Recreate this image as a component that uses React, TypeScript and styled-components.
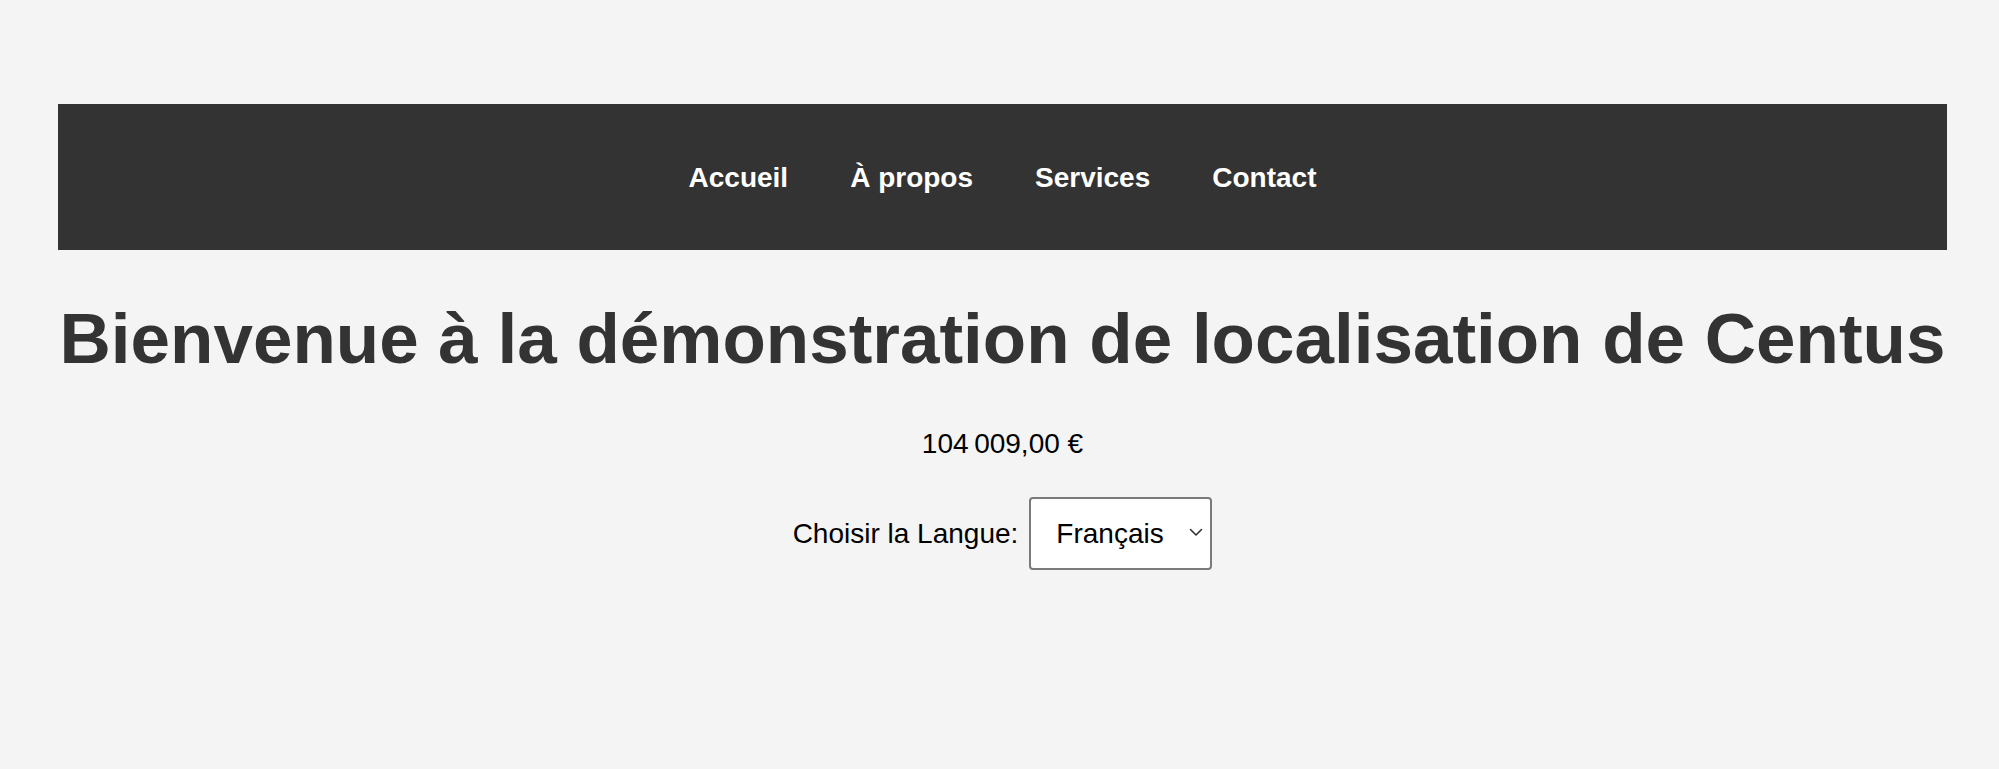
import React, { useState } from "react";
import styled, { createGlobalStyle } from "styled-components";

const GlobalStyle = createGlobalStyle`
  html, body {
    margin: 0;
    padding: 0;
    background: #f4f4f4;
  }
  body {
    font-family: "Liberation Sans", Arial, Helvetica, sans-serif;
    color: #000;
  }
`;

const Page = styled.div`
  padding: 104px 52px 0 58px;
  min-height: 769px;
  box-sizing: border-box;
`;

const NavBar = styled.nav`
  height: 146px;
  background: #333333;
  display: flex;
  align-items: center;
  justify-content: center;
  gap: 62px;
`;

const NavLink = styled.a`
  color: #ffffff;
  font-size: 28px;
  font-weight: 700;
  text-decoration: none;
  line-height: 32px;
  margin-top: 1px;
`;

const Title = styled.h1`
  margin: 48px 0 0;
  font-size: 71px;
  line-height: 82px;
  font-weight: 700;
  color: #333333;
  text-align: center;
  white-space: nowrap;
`;

const Price = styled.p`
  margin: 48px 0 0;
  font-size: 28px;
  line-height: 32px;
  text-align: center;
`;

const LangRow = styled.div`
  margin-top: 37px;
  display: flex;
  justify-content: center;
  align-items: center;
  gap: 11px;
`;

const Label = styled.label`
  font-size: 28px;
  line-height: 32px;
`;

const SelectWrap = styled.div`
  position: relative;
  display: inline-flex;
`;

const Select = styled.select`
  appearance: none;
  -webkit-appearance: none;
  width: 183px;
  height: 73px;
  box-sizing: border-box;
  padding: 0 0 0 25px;
  border: 2px solid #7a7a7a;
  border-radius: 4px;
  background: #ffffff;
  font-family: "Liberation Sans", Arial, Helvetica, sans-serif;
  font-size: 28px;
  color: #000;
  outline: none;
`;

const Chevron = styled.svg`
  position: absolute;
  right: 9px;
  top: 31px;
  width: 14px;
  height: 9px;
  pointer-events: none;
`;

export default function App() {
  const [lang, setLang] = useState("fr");
  return (
    <>
      <GlobalStyle />
      <Page>
        <NavBar>
          <NavLink href="#">Accueil</NavLink>
          <NavLink href="#">À propos</NavLink>
          <NavLink href="#">Services</NavLink>
          <NavLink href="#">Contact</NavLink>
        </NavBar>
        <Title>Bienvenue à la démonstration de localisation de Centus</Title>
        <Price>104&#8239;009,00 €</Price>
        <LangRow>
          <Label htmlFor="lang">Choisir la Langue:</Label>
          <SelectWrap>
            <Select id="lang" value={lang} onChange={(e) => setLang(e.target.value)}>
              <option value="fr">Français</option>
              <option value="en">English</option>
              <option value="de">Deutsch</option>
            </Select>
            <Chevron viewBox="0 0 14 9" fill="none">
              <path d="M1.5 1.5 L7 7 L12.5 1.5" stroke="#333" strokeWidth="1.6" strokeLinecap="round" strokeLinejoin="round" />
            </Chevron>
          </SelectWrap>
        </LangRow>
      </Page>
    </>
  );
}
